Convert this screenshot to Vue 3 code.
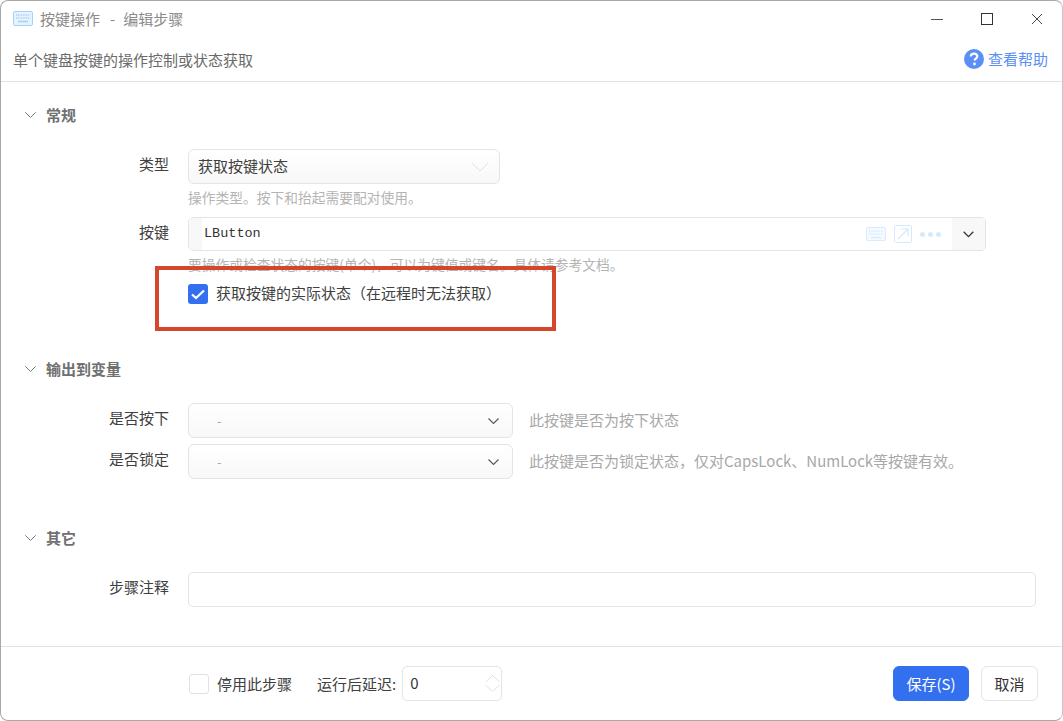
<script setup>
const closeIcon = 'M1 1 L11 11 M11 1 L1 11'
</script>

<template>
  <div class="win">
    <header class="titlebar">
      <svg class="kb" width="20" height="15" viewBox="0 0 20 15">
        <rect x="0.5" y="0.5" width="19" height="14" rx="1.5" fill="#e6f3ff" stroke="#a5d3f7" />
        <path d="M3 4h14M3 7h14" stroke="#a5d3f7" stroke-width="1.4" stroke-dasharray="1.4 1" fill="none" />
        <path d="M5 10.5h10" stroke="#a5d3f7" stroke-width="1.4" fill="none" />
      </svg>
      <span class="title">按键操作</span>
      <span class="title dash">-</span>
      <span class="title">编辑步骤</span>
      <div class="spacer"></div>
      <div class="winbtns">
        <svg width="12" height="12" viewBox="0 0 12 12"><path d="M0 6.5h12" stroke="#555" stroke-width="1" /></svg>
        <svg width="12" height="12" viewBox="0 0 12 12"><rect x="0.5" y="0.5" width="11" height="11" fill="none" stroke="#333" stroke-width="1" /></svg>
        <svg width="12" height="12" viewBox="0 0 12 12"><path :d="closeIcon" stroke="#444" stroke-width="1" fill="none" /></svg>
      </div>
    </header>
    <div class="subbar">
      <span class="desc">单个键盘按键的操作控制或状态获取</span>
      <a class="help">
        <svg width="20" height="20" viewBox="0 0 20 20">
          <circle cx="10" cy="10" r="10" fill="#5b8ff5" />
          <path d="M6.8 7.6c0-1.9 1.4-3 3.3-3s3.2 1.1 3.2 2.7c0 2.400-2.700 2.300-2.700 4.300" fill="none" stroke="#fff" stroke-width="2.200" />
          <circle cx="10.500" cy="15" r="1.400" fill="#fff" />
        </svg>
        <span>查看帮助</span>
      </a>
    </div>

    <main class="content">
      <section class="sec sec-general">
        <h3 class="sec-h">
          <svg class="chev" width="11" height="6" viewBox="0 0 11 6"><path d="M0.300 0.300 L5.500 5.500 L10.700 0.300" fill="none" stroke="#777" /></svg>
          <span>常规</span>
        </h3>
        <div class="row first">
          <label class="lbl">类型</label>
          <div class="sel type">
            <span class="val">获取按键状态</span>
            <svg width="18" height="10" viewBox="0 0 18 10"><path d="M0.500 0.500 L9 9 L17.500 0.500" fill="none" stroke="#e2e2e2" /></svg>
          </div>
        </div>
        <p class="hint">操作类型。按下和抬起需要配对使用。</p>
        <div class="row key-row">
          <label class="lbl">按键</label>
          <div class="keybox">
            <span class="strip"></span>
            <span class="keyval">LButton</span>
            <span class="spacer"></span>
            <svg width="20" height="14" viewBox="0 0 20 14">
              <rect x="0.500" y="0.500" width="19" height="13" rx="1.500" fill="#f4faff" stroke="#d8ecfc" />
              <path d="M3 4h14M3 7h14" stroke="#d8ecfc" stroke-width="1.400" stroke-dasharray="1.400 1" fill="none" />
              <path d="M5 10.500h10" stroke="#d8ecfc" stroke-width="1.400" />
            </svg>
            <svg class="ext" width="18" height="18" viewBox="0 0 18 18">
              <rect x="0.500" y="0.500" width="17" height="17" rx="1" fill="none" stroke="#d3e9fb" />
              <path d="M4 14 L14 4 M7 4 H14 V11" fill="none" stroke="#d3e9fb" stroke-width="1.200" />
            </svg>
            <span class="dots"><i></i><i></i><i></i></span>
            <span class="drop">
              <svg width="11" height="7" viewBox="0 0 11 7"><path d="M0.700 0.800 L5.500 5.600 L10.300 0.800" fill="none" stroke="#333" stroke-width="1.300" /></svg>
            </span>
          </div>
        </div>
        <p class="hint">要操作或检查状态的按键(单个)，可以为键值或键名。具体请参考文档。</p>
        <div class="check-row">
          <span class="cb on">
            <svg width="14" height="11" viewBox="0 0 14 11"><path d="M1 5.500 L5 9 L13 1.500" fill="none" stroke="#fff" stroke-width="2.200" /></svg>
          </span>
          <span class="check-txt">获取按键的实际状态（在远程时无法获取）</span>
          <div class="redbox"></div>
        </div>
      </section>

      <section class="sec sec-out">
        <h3 class="sec-h">
          <svg class="chev" width="11" height="6" viewBox="0 0 11 6"><path d="M0.300 0.300 L5.500 5.500 L10.700 0.300" fill="none" stroke="#777" /></svg>
          <span>输出到变量</span>
        </h3>
        <div class="row out first-out">
          <label class="lbl">是否按下</label>
          <div class="sel var"><span class="minus">-</span><svg width="11" height="6" viewBox="0 0 11 6"><path d="M0.500 0.500 L5.500 5.500 L10.500 0.500" fill="none" stroke="#555" stroke-width="1.100" /></svg></div>
          <span class="side">此按键是否为按下状态</span>
        </div>
        <div class="row out">
          <label class="lbl">是否锁定</label>
          <div class="sel var"><span class="minus">-</span><svg width="11" height="6" viewBox="0 0 11 6"><path d="M0.500 0.500 L5.500 5.500 L10.500 0.500" fill="none" stroke="#555" stroke-width="1.100" /></svg></div>
          <span class="side">此按键是否为锁定状态，仅对CapsLock、NumLock等按键有效。</span>
        </div>
      </section>

      <section class="sec sec-other">
        <h3 class="sec-h">
          <svg class="chev" width="11" height="6" viewBox="0 0 11 6"><path d="M0.300 0.300 L5.500 5.500 L10.700 0.300" fill="none" stroke="#777" /></svg>
          <span>其它</span>
        </h3>
        <div class="row note">
          <label class="lbl">步骤注释</label>
          <div class="textin"></div>
        </div>
      </section>
    </main>

    <footer class="foot">
      <span class="cb off"></span>
      <span class="ftxt">停用此步骤</span>
      <span class="ftxt delay">运行后延迟:</span>
      <div class="num">
        <span class="val">0</span>
        <svg width="15" height="17" viewBox="0 0 15 17">
          <path d="M0.500 7 L7.500 0.500 L14.500 7 M0.500 10 L7.500 16.500 L14.500 10" fill="none" stroke="#e0e0e0" />
        </svg>
      </div>
      <div class="spacer"></div>
      <button class="btn primary">保存(S)</button>
      <button class="btn">取消</button>
    </footer>
  </div>
</template>

<style scoped>
.win {
  width: 1063px;
  height: 721px;
  box-sizing: border-box;
  background: #fff;
  border: 1px solid #a8a8a8;
  border-right-color: #c8c8c8;
  border-radius: 8px;
  overflow: hidden;
  display: flex;
  flex-direction: column;
  position: relative;
  font-family: "Noto Sans CJK SC", "Noto Sans", sans-serif;
  font-size: 15px;
  line-height: 20px;
  color: #333;
}
.spacer { flex: 1; }
.titlebar {
  height: 39px;
  box-sizing: border-box;
  display: flex;
  align-items: center;
  padding: 0 0 4px 12px;
  flex: none;
}
.kb { margin-right: 7px; }
.title { color: #8a8a8a; }
.dash { margin: 0 8px 0 10px; }
.winbtns {
  display: flex;
  align-items: center;
  gap: 38px;
  padding-right: 19px;
}
.subbar {
  height: 42px;
  flex: none;
  box-sizing: border-box;
  border-bottom: 1px solid #e2e2e2;
  display: flex;
  align-items: center;
  justify-content: space-between;
  padding: 0 14px 4px 12px;
}
.desc { color: #6a6a6a; padding-top: 2px; }
.help {
  display: flex;
  align-items: center;
  gap: 4px;
  color: #5b8ff5;
}
.content { flex: 1; min-height: 0; }
.sec { padding-left: 24px; }
.sec-general { padding-top: 22px; }
.sec-out { padding-top: 54px; }
.sec-other { padding-top: 48px; }
.sec-h {
  margin: 0;
  height: 22px;
  display: flex;
  align-items: center;
  gap: 10px;
  font-size: 15px;
  font-weight: 700;
  color: #707070;
}
.row { display: flex; align-items: center; }
.lbl {
  width: 144px;
  margin-right: 19px;
  padding-bottom: 5px;
  text-align: right;
  color: #404040;
}
.row.first { margin-top: 23px; }
.sel {
  box-sizing: border-box;
  border: 1px solid #e4e4e4;
  border-radius: 6px;
  background: linear-gradient(#fff, #f8f8f8);
  display: flex;
  align-items: center;
  justify-content: space-between;
}
.val { padding-bottom: 2px; }
.sel.type {
  width: 312px;
  height: 35px;
  padding: 0 10px 0 9px;
  color: #404040;
}
.hint {
  margin: 3px 0 0;
  padding-left: 163px;
  height: 20px;
  line-height: 20px;
  font-size: 13.75px;
  color: #b4b4b4;
}
.key-row { margin-top: 10px; }
.keybox {
  box-sizing: border-box;
  width: 798px;
  height: 34px;
  border: 1px solid #e4e4e4;
  border-radius: 5px;
  display: flex;
  align-items: center;
  overflow: hidden;
}
.strip { width: 13px; height: 100%; background: #f8f8f8; flex: none; }
.keyval {
  margin-left: 2px;
  font-family: "Liberation Mono", monospace;
  font-size: 13.5px;
  color: #333;
}
.ext { margin-left: 8px; }
.dots { display: flex; gap: 3px; margin: 0 11px 0 8px; }
.dots i { width: 5px; height: 5px; border-radius: 50%; background: #d6e9fb; display: block; }
.drop {
  width: 33px;
  height: 100%;
  background: #f8f8f8;
  display: flex;
  align-items: center;
  justify-content: center;
}
.check-row {
  position: relative;
  display: flex;
  align-items: center;
  margin-top: 10px;
  margin-left: 163px;
  height: 20px;
}
.cb {
  width: 20px;
  height: 20px;
  box-sizing: border-box;
  border-radius: 3px;
  display: flex;
  align-items: center;
  justify-content: center;
  flex: none;
}
.cb.on { background: #3370f0; }
.cb.off { border: 1px solid #e2e2e2; }
.check-txt { margin-left: 8px; color: #404040; padding-bottom: 2px; }
.redbox {
  position: absolute;
  left: -33px;
  top: -18px;
  width: 401px;
  height: 65px;
  box-sizing: border-box;
  border: 4px solid #d5472d;
  pointer-events: none;
}
.row.out { height: 35px; margin-top: 6px; }
.row.first-out { margin-top: 23px; }
.sel.var {
  width: 325px;
  height: 35px;
  padding: 0 13px 0 28px;
}
.minus { color: #aaa; font-size: 13px; }
.side { margin-left: 16px; color: #a8a8a8; padding-bottom: 2px; }
.row.note { margin-top: 23px; }
.textin {
  box-sizing: border-box;
  width: 848px;
  height: 35px;
  border: 1px solid #e4e4e4;
  border-radius: 5px;
}
.foot {
  height: 74px;
  flex: none;
  box-sizing: border-box;
  border-top: 1px solid #e2e2e2;
  display: flex;
  align-items: center;
  padding: 0 24px 0 188px;
}
.ftxt { color: #404040; margin-left: 8px; }
.delay { margin-left: 25px; }
.num {
  box-sizing: border-box;
  width: 100px;
  height: 35px;
  margin-left: 6px;
  border: 1px solid #e4e4e4;
  border-radius: 5px;
  display: flex;
  align-items: center;
  justify-content: space-between;
  padding: 0 1px 0 7px;
  color: #333;
}
.btn {
  height: 35px;
  min-width: 57px;
  box-sizing: border-box;
  padding: 0 12px;
  margin-left: 12px;
  border: 1px solid #e4e4e4;
  border-radius: 6px;
  background: #fff;
  font: inherit;
  color: #333;
}
.btn.primary {
  width: 76px;
  background: #3370f0;
  border-color: #3370f0;
  color: #fff;
  padding: 0;
}
</style>

<style>
html, body { margin: 0; background: #fff; overflow: hidden; }
</style>
